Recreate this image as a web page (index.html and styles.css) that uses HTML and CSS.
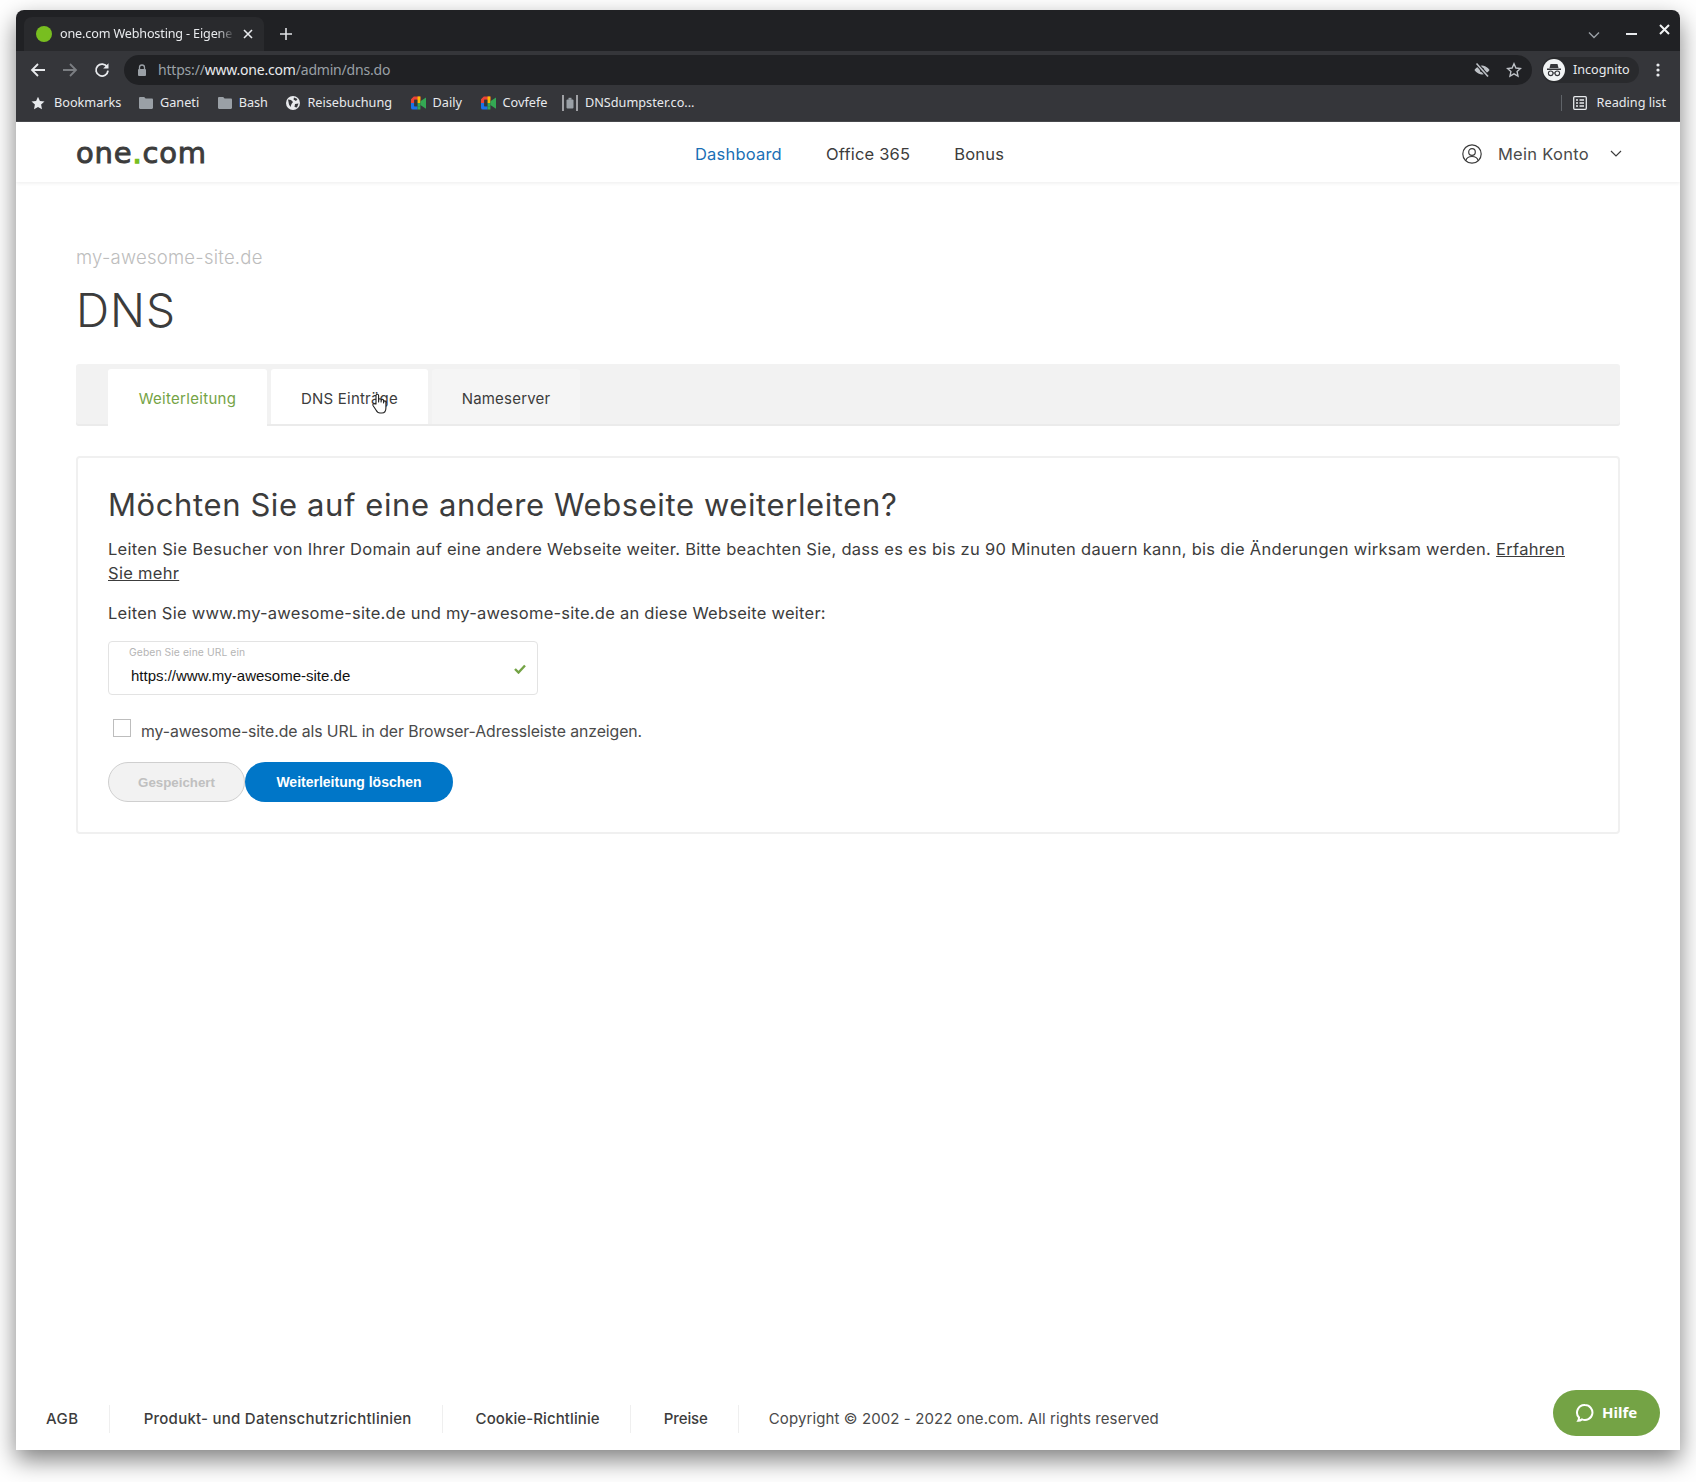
FILE: index.html
```html
<!DOCTYPE html>
<html lang="de">
<head>
<meta charset="utf-8">
<title>one.com Webhosting</title>
<link rel="stylesheet" href="styles.css">
</head>
<body>
<div class="window">
  <div class="tabstrip">
    <div class="tab">
      <span class="favicon"></span>
      <span class="tab-title">one.com Webhosting - Eigene</span>
      <svg class="tab-close" width="10" height="10" viewBox="0 0 10 10"><path d="M1 1l8 8M9 1l-8 8" stroke="#e8eaed" stroke-width="1.6"/></svg>
    </div>
    <svg class="newtab" width="14" height="14" viewBox="0 0 14 14"><path d="M7 1v12M1 7h12" stroke="#e0e2e5" stroke-width="1.6"/></svg>
    <div class="winctl">
      <svg class="ctl-search" width="12" height="8" viewBox="0 0 12 8"><path d="M1 1.5l5 5 5-5" fill="none" stroke="#9aa0a6" stroke-width="1.4"/></svg>
      <svg class="ctl-min" width="11" height="2" viewBox="0 0 11 2"><path d="M0 1h11" stroke="#e8eaed" stroke-width="2"/></svg>
      <svg class="ctl-close" width="11" height="11" viewBox="0 0 11 11"><path d="M1 1l9 9M10 1l-9 9" stroke="#f1f3f4" stroke-width="2"/></svg>
    </div>
  </div>
  <div class="toolbar">
    <svg class="tool first" width="16" height="16" viewBox="0 0 16 16"><path d="M15 8H2M8 2L2 8l6 6" fill="none" stroke="#e8eaed" stroke-width="1.8"/></svg>
    <svg class="tool" width="16" height="16" viewBox="0 0 16 16"><path d="M1 8h13M8 2l6 6-6 6" fill="none" stroke="#7b7e82" stroke-width="1.8"/></svg>
    <svg class="tool" width="16" height="16" viewBox="0 0 16 16"><path d="M13.2 5A6 6 0 1 0 14 8.6" fill="none" stroke="#e8eaed" stroke-width="1.8"/><path d="M14.5 1.2v5.3H9.2z" fill="#e8eaed"/></svg>
    <div class="omnibox">
      <svg class="lock" width="10" height="13" viewBox="0 0 10 13"><path d="M2.5 5V3.5a2.5 2.5 0 0 1 5 0V5" fill="none" stroke="#9aa0a6" stroke-width="1.3"/><rect x="1" y="5" width="8" height="7" rx="1" fill="#9aa0a6"/></svg>
      <span class="url"><span class="dim">https://</span><span class="host">www.one.com</span><span class="dim">/admin/dns.do</span></span>
      <svg class="omni-eye" width="18" height="16" viewBox="0 0 18 16"><path d="M1.5 8S4.5 3.5 9 3.5 16.5 8 16.5 8 13.5 12.5 9 12.5 1.5 8 1.5 8z" fill="#bdc1c6"/><circle cx="9" cy="8" r="2.2" fill="#202124"/><path d="M3.5 1.5l11.5 13" stroke="#202124" stroke-width="3.4"/><path d="M3.5 1.5l11.5 13" stroke="#bdc1c6" stroke-width="1.6"/></svg>
      <svg class="omni-star" width="16" height="16" viewBox="0 0 16 16"><path d="M8 1.8l1.9 4.2 4.6.5-3.4 3.1.9 4.6L8 11.9l-4 2.3.9-4.6-3.4-3.1 4.6-.5z" fill="none" stroke="#bdc1c6" stroke-width="1.4"/></svg>
    </div>
    <div class="incognito">
      <svg width="22" height="22" viewBox="0 0 22 22"><circle cx="11" cy="11" r="11" fill="#f1f3f4"/><path d="M7.5 5h7l1 4h-9zM4 9.6h14v1.3H4z" fill="#35363a"/><circle cx="7.7" cy="14.3" r="2.3" fill="none" stroke="#35363a" stroke-width="1.1"/><circle cx="14.3" cy="14.3" r="2.3" fill="none" stroke="#35363a" stroke-width="1.1"/><path d="M10 14h2" stroke="#35363a"/></svg>
      <span>Incognito</span>
    </div>
    <svg class="menu" width="4" height="14" viewBox="0 0 4 14"><circle cx="2" cy="2" r="1.6" fill="#e8eaed"/><circle cx="2" cy="7" r="1.6" fill="#e8eaed"/><circle cx="2" cy="12" r="1.6" fill="#e8eaed"/></svg>
  </div>
  <div class="bookmarks">
    <div class="bm bm-star">
      <svg width="14" height="14" viewBox="0 0 14 14"><path d="M7 .8l1.9 4.2 4.6.5-3.4 3.1.9 4.6L7 10.9l-4 2.3.9-4.6L.5 5.5l4.6-.5z" fill="#e8eaed"/></svg>
      <span>Bookmarks</span>
    </div>
    <div class="bm">
      <svg width="14" height="12" viewBox="0 0 14 12"><path d="M0 1.2C0 .5.5 0 1.2 0h4l1.4 1.6h6.2c.7 0 1.2.5 1.2 1.2v8c0 .7-.5 1.2-1.2 1.2H1.2C.5 12 0 11.500 0 10.800z" fill="#9aa0a6"/></svg>
      <span>Ganeti</span>
    </div>
    <div class="bm">
      <svg width="14" height="12" viewBox="0 0 14 12"><path d="M0 1.2C0 .5.5 0 1.2 0h4l1.400 1.600h6.200c.7 0 1.200.5 1.200 1.200v8c0 .7-.5 1.200-1.200 1.200H1.200C.5 12 0 11.500 0 10.800z" fill="#9aa0a6"/></svg>
      <span>Bash</span>
    </div>
    <div class="bm">
      <svg width="14" height="14" viewBox="0 0 14 14"><circle cx="7" cy="7" r="7" fill="#e8eaed"/><path d="M2 3.500l3 .5 2 2-1.500 2-1 3-1.500-2.500zM8 1.500l3.500 1.500-1.500 2-2.500-1.500zM9 8l3.500-.5-1.500 4-2.500-.5z" fill="#35363a"/></svg>
      <span>Reisebuchung</span>
    </div>
    <div class="bm">
      <svg width="15" height="14" viewBox="0 0 16 14"><path d="M3 0h7v3.500H3.500V7H0V3z" fill="#ea4335"/><path d="M0 7h3.500v3.500H7V14H2a2 2 0 0 1-2-2z" fill="#1a73e8"/><path d="M3.500 3.500H7v7H3.500z" fill="#35363a"/><path d="M7 10.500h3V14H7z" fill="#34a853"/><path d="M7 0h3v7H7z" fill="#fbbc04"/><path d="M7 7h3v3.500H7z" fill="#34a853"/><path d="M10 5l6-4v12l-6-4z" fill="#34a853"/></svg>
      <span>Daily</span>
    </div>
    <div class="bm bm-covfefe">
      <svg width="15" height="14" viewBox="0 0 16 14"><path d="M3 0h7v3.500H3.500V7H0V3z" fill="#ea4335"/><path d="M0 7h3.500v3.500H7V14H2a2 2 0 0 1-2-2z" fill="#1a73e8"/><path d="M3.500 3.500H7v7H3.500z" fill="#35363a"/><path d="M7 10.500h3V14H7z" fill="#34a853"/><path d="M7 0h3v7H7z" fill="#fbbc04"/><path d="M7 7h3v3.500H7z" fill="#34a853"/><path d="M10 5l6-4v12l-6-4z" fill="#34a853"/></svg>
      <span>Covfefe</span>
    </div>
    <div class="bm">
      <svg width="16" height="16" viewBox="0 0 16 16"><path d="M1 0v16M15 0v16" stroke="#e8eaed" stroke-width="1.200"/><rect x="4.500" y="4.500" width="7" height="9" rx="1" fill="#9aa0a6"/><rect x="6.500" y="2.800" width="3" height="2" fill="#9aa0a6"/></svg>
      <span>DNSdumpster.co...</span>
    </div>
    <div class="bm reading">
      <svg width="14" height="14" viewBox="0 0 14 14"><rect x=".7" y=".7" width="12.600" height="12.600" rx="1" fill="none" stroke="#e8eaed" stroke-width="1.300"/><path d="M3 4h2M6.500 4H11M3 7h2M6.500 7H11M3 10h2M6.500 10H11" stroke="#e8eaed" stroke-width="1.300"/></svg>
      <span>Reading list</span>
    </div>
  </div>

  <div class="page">
    <header class="site-header">
      <div class="logo">one<span class="logo-dot">.</span>com</div>
      <nav class="main-nav">
        <a class="active">Dashboard</a>
        <a>Office 365</a>
        <a>Bonus</a>
      </nav>
      <div class="account">
        <svg width="20" height="20" viewBox="0 0 20 20"><circle cx="10" cy="10" r="9.200" fill="none" stroke="#3c3c3c" stroke-width="1.200"/><circle cx="10" cy="8" r="3.300" fill="none" stroke="#3c3c3c" stroke-width="1.200"/><path d="M4 16.500c.5-3 3-4 6-4s5.500 1 6 4" fill="none" stroke="#3c3c3c" stroke-width="1.200"/></svg>
        <span>Mein Konto</span>
        <svg class="account-chev" width="12" height="7" viewBox="0 0 12 7"><path d="M1 1l5 5 5-5" fill="none" stroke="#3c3c3c" stroke-width="1.200"/></svg>
      </div>
    </header>

    <main class="content">
      <div class="domain">my-awesome-site.de</div>
      <h1>DNS</h1>
      <div class="tabs">
        <a class="dns-tab selected">Weiterleitung</a>
        <a class="dns-tab hover">DNS Einträge
          <svg class="cursor" width="18" height="21" viewBox="0 0 18 21"><path d="M5 11V2.500a1.300 1.300 0 0 1 2.600 0V9l.1-2a1.200 1.200 0 0 1 2.400 0v2l.1-1.400a1.200 1.200 0 0 1 2.400 0V10l.1-1a1.100 1.100 0 0 1 2.200 0v6c0 3-1.500 5-4 5H9c-2 0-3-1-4-3l-3-4.500c-.7-1.200 1-2.500 2-1.500z" fill="#fff" stroke="#222" stroke-width="1.100" stroke-linejoin="round"/></svg>
        </a>
        <a class="dns-tab">Nameserver</a>
      </div>
      <section class="card">
        <h2>Möchten Sie auf eine andere Webseite weiterleiten?</h2>
        <p class="lead">Leiten Sie Besucher von Ihrer Domain auf eine andere Webseite weiter. Bitte beachten Sie, dass es es bis zu 90 Minuten dauern kann, bis die Änderungen wirksam werden. <a class="more">Erfahren Sie mehr</a></p>
        <p class="sub">Leiten Sie www.my-awesome-site.de und my-awesome-site.de an diese Webseite weiter:</p>
        <div class="field">
          <label>Geben Sie eine URL ein</label>
          <span class="value">https://www.my-awesome-site.de</span>
          <svg class="check" width="12" height="10" viewBox="0 0 12 10"><path d="M1 5l3.500 3.500L11 1.500" fill="none" stroke="#74a345" stroke-width="2.400"/></svg>
        </div>
        <div class="checkrow">
          <span class="box"></span>
          <span class="checklabel">my-awesome-site.de als URL in der Browser-Adressleiste anzeigen.</span>
        </div>
        <div class="buttons">
          <button class="btn saved">Gespeichert</button>
          <button class="btn primary">Weiterleitung löschen</button>
        </div>
      </section>
    </main>

    <footer class="site-footer">
      <a>AGB</a>
      <a>Produkt- und Datenschutzrichtlinien</a>
      <a>Cookie-Richtlinie</a>
      <a>Preise</a>
      <span class="copy">Copyright © 2002 - 2022 one.com. All rights reserved</span>
      <div class="help">
        <svg width="20" height="20" viewBox="0 0 20 20"><path d="M10 2a7.500 7.500 0 1 1-3 14.400c-1 .8-2.300 1.300-3.800 1.300.6-.9.8-2 .8-3.200A7.500 7.500 0 0 1 10 2z" fill="none" stroke="#fff" stroke-width="2"/></svg>
        <span>Hilfe</span>
      </div>
    </footer>
  </div>
</div>
</body>
</html>
```

FILE: styles.css
```css
* { box-sizing: border-box; }
html, body { margin: 0; height: 100%; background: #fff; }
body { padding: 10px 16px 32px; font-family: Inter, "Liberation Sans", sans-serif; color: #3c3c3c; overflow: hidden; }
.window { height: 1440px; display: flex; flex-direction: column; border-radius: 8px 8px 0 0; box-shadow: 0 10px 24px rgba(0,0,0,.5); background: #fff; overflow: hidden; }

.tabstrip { height: 41px; background: #202124; display: flex; align-items: flex-end; padding-left: 8px; flex: none; font-family: "Noto Sans", sans-serif; }
.tab { width: 240px; height: 34px; background: #292a2d; border-radius: 8px 8px 0 0; display: flex; align-items: center; padding-left: 12px; color: #e8eaed; font-size: 12.600px; }
.favicon { width: 16px; height: 16px; border-radius: 50%; background: #78be20; flex: none; }
.tab-title { margin-left: 8px; width: 175px; white-space: nowrap; overflow: hidden; letter-spacing: -.15px; padding-bottom: 2px; -webkit-mask-image: linear-gradient(90deg, #000 90%, transparent); mask-image: linear-gradient(90deg, #000 90%, transparent); }
.tab-close { margin-left: 8px; flex: none; }
.newtab { margin: 0 0 10px 15px; }
.winctl { margin-left: auto; height: 41px; position: relative; width: 110px; }
.ctl-search { position: absolute; left: 18px; top: 21px; }
.ctl-min { position: absolute; left: 56px; top: 23px; }
.ctl-close { position: absolute; left: 89px; top: 14px; }

.toolbar { height: 38px; background: #35363a; display: flex; align-items: center; flex: none; font-family: "Noto Sans", sans-serif; }
.tool { margin-left: 16px; flex: none; }
.tool.first { margin-left: 14px; }
.omnibox { margin-left: 14px; width: 1408px; height: 30px; background: #202124; border-radius: 15px; display: flex; align-items: center; padding-left: 13px; }
.url { margin-left: 11px; font-size: 14px; letter-spacing: -.2px; padding-bottom: 2px; }
.dim { color: #9aa0a6; }
.host { color: #e8eaed; }
.omni-eye { margin-left: auto; }
.omni-star { margin: 0 10px 0 15px; }
.incognito { margin-left: 10px; width: 97px; height: 26px; border-radius: 13px; background: #292a2d; display: flex; align-items: center; padding-left: 1px; color: #e8eaed; font-size: 12.600px; gap: 8px; flex: none; }
.incognito span { padding-bottom: 2px; }
.menu { margin-left: 17px; flex: none; }

.bookmarks { height: 33px; background: #35363a; display: flex; align-items: center; padding: 0 0 5px 15px; flex: none; font-family: "Noto Sans", sans-serif; font-size: 12.700px; color: #e8eaed; border-bottom: 1px solid #4a4b4f; }
.bm { display: flex; align-items: center; gap: 7px; margin-right: 18.500px; white-space: nowrap; }
.bm span { padding-bottom: 1px; }
.bm-star { gap: 9px; margin-right: 17.500px; }
.bm-covfefe { margin-right: 14.500px; }
.reading { margin-left: auto; margin-right: 14px; border-left: 1px solid #5f6368; padding-left: 11px; height: 16px; gap: 10px; color: #e8eaed; }

.page { flex: 1; display: flex; flex-direction: column; min-height: 0; }
.site-header { height: 60px; padding: 3px 60px 0; display: flex; align-items: center; flex: none; position: relative; box-shadow: 0 1px 4px rgba(0,0,0,.08); }
.logo { font-family: "DejaVu Sans", sans-serif; font-size: 29px; font-weight: 400; -webkit-text-stroke: .9px #3c3c3c; letter-spacing: .8px; color: #3c3c3c; width: 619px; line-height: 1; }
.logo-dot { color: #78be20; -webkit-text-stroke: 1.4px #78be20; }
.main-nav { display: flex; gap: 44px; font-size: 16.500px; letter-spacing: .2px; }
.main-nav a { color: #3c3c3c; }
.main-nav .active { color: #1a6fb5; }
.account { margin-left: auto; display: flex; align-items: center; font-size: 16.500px; color: #4a4a4a; letter-spacing: .3px; }
.account span { margin-left: 16px; }
.account-chev { margin-left: 21px; margin-right: -2px; }

.content { padding: 0 60px; flex: 1; }
.domain { margin-top: 63px; font-size: 18.500px; line-height: 24px; color: #bdbdbd; font-weight: 300; letter-spacing: .25px; }
h1 { margin: 13px 0 0; font-size: 46px; line-height: 56px; font-weight: 300; color: #3c3c3c; letter-spacing: 1px; }
.tabs { margin-top: 26px; height: 62px; background: #f2f2f2; border-radius: 3px; display: flex; gap: 4px; padding: 5px 0 0 32px; box-shadow: inset 0 -2px 0 #ebebeb; }
.dns-tab { height: 55px; padding-top: 4px; display: flex; align-items: center; justify-content: center; font-size: 15px; color: #3c3c3c; border-radius: 3px 3px 0 0; background: #f5f5f5; letter-spacing: .2px; position: relative; width: 148px; }
.selected { background: #fff; color: #74a345; width: 159px; height: 57px; padding-bottom: 2px; letter-spacing: .3px; }
.hover { background: #fff; width: 157px; }
.cursor { position: absolute; left: 100px; top: 24px; }
.card { margin-top: 30px; height: 378px; border: 2px solid #f0f0f0; border-radius: 4px; padding: 26px 30px 0; }
h2 { margin: 0; font-size: 31px; line-height: 42px; font-weight: 400; color: #3c3c3c; letter-spacing: .6px; }
.lead { margin: 11px 0 0; font-size: 16.500px; line-height: 24px; letter-spacing: .29px; }
.more { text-decoration: underline; }
.sub { margin: 16px 0 0; font-size: 16.500px; line-height: 24px; letter-spacing: .24px; }
.field { margin-top: 16px; width: 430px; height: 54px; border: 1px solid #e3e3e3; border-radius: 4px; position: relative; padding: 0 0 0 22px; }
.field label { position: absolute; left: 20px; top: 4px; font-size: 10.300px; color: #b5b5b5; letter-spacing: .1px; }
.value { position: absolute; left: 22px; top: 24px; font-family: "Liberation Sans", sans-serif; font-size: 15px; color: #111; line-height: 20px; }
.check { position: absolute; right: 11px; top: 22px; }
.checkrow { margin-top: 24px; display: flex; padding-left: 5px; }
.box { width: 18px; height: 18px; border: 1px solid #bdbdbd; flex: none; }
.checklabel { margin: 3px 0 0 10px; font-size: 15.800px; line-height: 20px; letter-spacing: -.08px; color: #4a4a4a; }
.buttons { margin-top: 20px; display: flex; }
.btn { height: 40px; border-radius: 20px; font-family: "Liberation Sans", sans-serif; font-weight: 700; font-size: 14px; padding: 0; }
.saved { width: 137px; background: #f2f2f2; border: 1px solid #cfcfcf; color: #c0c0c0; font-size: 13.300px; }
.primary { width: 208px; background: #0076c8; border: 0; color: #fff; }

.site-footer { height: 78px; padding: 15px 0 0 30px; display: flex; align-items: center; flex: none; font-size: 15px; position: relative; }
.site-footer a { font-weight: 500; padding-right: 30px; margin-right: 33px; border-right: 1px solid #efefef; line-height: 28px; letter-spacing: .1px; white-space: nowrap; }
.site-footer a:nth-of-type(1) { letter-spacing: .5px; margin-right: 34px; }
.site-footer a:nth-of-type(2) { letter-spacing: .25px; }
.site-footer a:nth-of-type(4) { margin-right: 30px; letter-spacing: -.1px; }
.copy { color: #4a4a4a; white-space: nowrap; letter-spacing: .1px; }
.help { position: absolute; right: 20px; top: 18px; width: 107px; height: 46px; border-radius: 23px; background: #74a345; color: #fff; display: flex; align-items: center; padding-left: 22px; gap: 7px; font-family: "Noto Sans", sans-serif; font-weight: 700; font-size: 15px; }
.help span { padding-bottom: 2px; }
```
